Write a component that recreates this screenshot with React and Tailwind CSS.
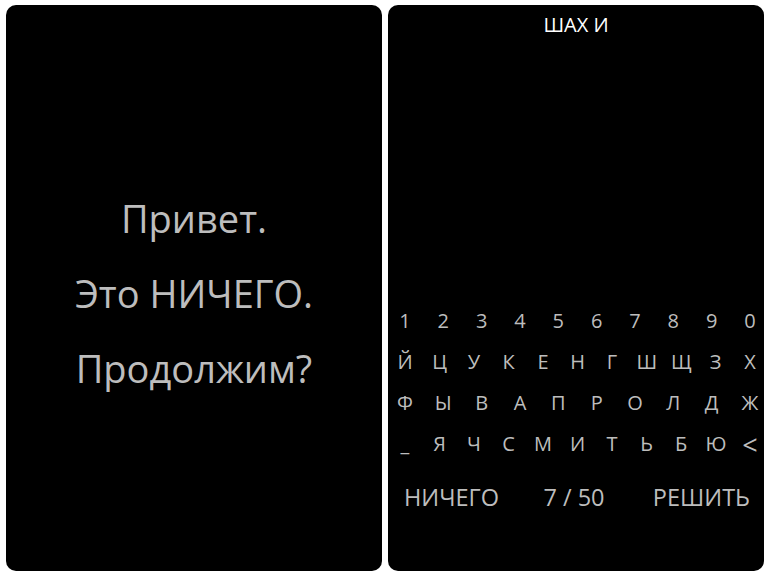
import React from 'react';

// Two phone screens side by side: greeting + keyboard puzzle screen.

const ROWS = [
  ['1', '2', '3', '4', '5', '6', '7', '8', '9', '0'],
  ['Й', 'Ц', 'У', 'К', 'Е', 'Н', 'Г', 'Ш', 'Щ', 'З', 'Х'],
  ['Ф', 'Ы', 'В', 'А', 'П', 'Р', 'О', 'Л', 'Д', 'Ж'],
  ['_', 'Я', 'Ч', 'С', 'М', 'И', 'Т', 'Ь', 'Б', 'Ю', '<'],
];

const font = { fontFamily: '"Open Sans", "Noto Sans", sans-serif' };

const Greeting = () => (
  <div className="w-[376px] h-[566px] bg-black rounded-[10px] flex flex-col items-center justify-center pt-[10px]">
    <div className="text-[38px] leading-[75px] text-[#bdbdbd]">Привет.</div>
    <div className="text-[38px] leading-[75px] text-[#bdbdbd]">Это НИЧЕГО.</div>
    <div className="text-[38px] leading-[75px] text-[#bdbdbd]">Продолжим?</div>
  </div>
);

const Keyboard = () => (
  <div className="w-[376px] h-[566px] bg-black rounded-[10px] flex flex-col pt-[6px]">
    <div className="text-center text-[20px] leading-[28px] text-white">ШАХ И</div>

    <div className="mt-[261px] flex flex-col">
      {ROWS.map((row, i) => (
        <div key={i} className="flex justify-between pl-[7px] pr-[4px] h-[41px]">
          {row.map((k) => (
            <span
              key={k}
              className={
                k === '<'
                  ? 'w-[20px] text-center text-[27px] leading-[44px] text-[#bdbdbd]'
                  : 'w-[20px] text-center text-[20px] leading-[41px] text-[#bdbdbd]'
              }
            >
              {k}
            </span>
          ))}
        </div>
      ))}
    </div>

    <div className="mt-[18px] flex items-center justify-between pl-[16px] pr-[14px] text-[23.5px] leading-[30px] text-[#bdbdbd]">
      <span>НИЧЕГО</span>
      <span className="mr-[4px]">7 / 50</span>
      <span>РЕШИТЬ</span>
    </div>
  </div>
);

export default function App() {
  return (
    <div className="w-[769px] h-[577px] bg-white flex gap-[6px] pl-[6px] pt-[5px]" style={font}>
      <Greeting />
      <Keyboard />
    </div>
  );
}
